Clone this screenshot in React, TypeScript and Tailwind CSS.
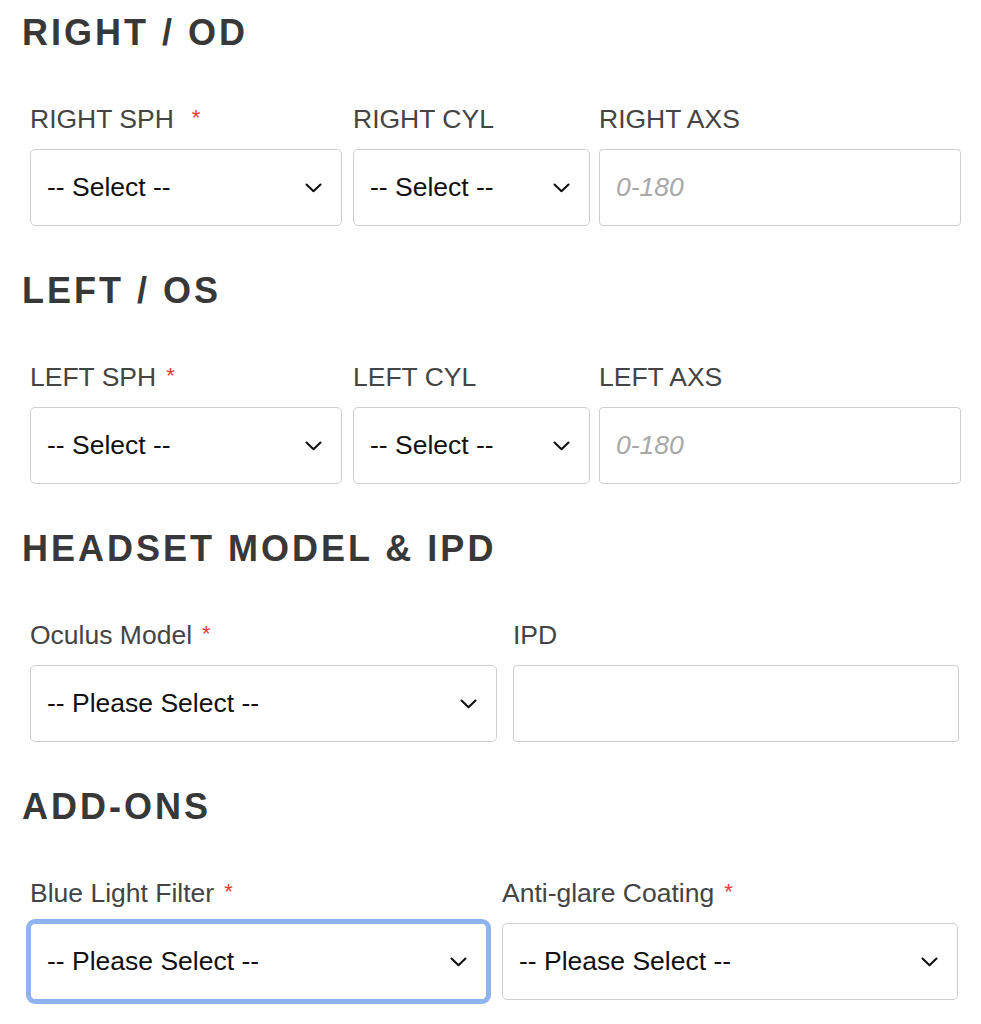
import React from "react";

const font = { fontFamily: '"Liberation Sans", Arial, sans-serif' };

function Chevron() {
  return (
    <svg width="17" height="10" viewBox="0 0 17 10" fill="none" className="shrink-0">
      <polyline points="1.5,1.5 8.5,8.2 15.5,1.5" stroke="#111" strokeWidth="2.1" strokeLinecap="round" strokeLinejoin="round" />
    </svg>
  );
}

function Label({ text, required, wide }: { text: string; required?: boolean; wide?: boolean }) {
  return (
    <div className="h-[32px] leading-[32px] text-[26.5px] text-[#444] whitespace-nowrap">
      {text}
      {required && (
        <span className={`text-[#e53a35] text-[22px] align-top relative top-[-1px] ${wide ? "ml-[18px]" : "ml-[10px]"}`}>*</span>
      )}
    </div>
  );
}

function SelectBox({ text, focused }: { text: string; focused?: boolean }) {
  return (
    <div
      className={`mt-[14px] h-[77px] rounded-[5px] bg-white flex items-center justify-between pl-[16px] pr-[19px] ${
        focused ? "border border-[#8fb3ee] shadow-[0_0_0_4px_#8fb3ee]" : "border-[1.5px] border-[#cfcfcf]"
      }`}
    >
      <span className="text-[26.5px] text-[#111] whitespace-nowrap">{text}</span>
      <Chevron />
    </div>
  );
}

function InputBox({ placeholder }: { placeholder?: string }) {
  return (
    <div className="mt-[14px] h-[77px] rounded-[4px] bg-white border-[1.5px] border-[#cfcfcf] flex items-center pl-[16px]">
      {placeholder && <span className="text-[26.5px] italic text-[#a8a8a8]">{placeholder}</span>}
    </div>
  );
}

function Heading({ children, first }: { children: React.ReactNode; first?: boolean }) {
  return (
    <h2 className={`${first ? "" : "mt-[43px]"} text-[36px] leading-[44px] font-bold tracking-[3px] text-[#383838] whitespace-nowrap`}>
      {children}
    </h2>
  );
}

export default function App() {
  return (
    <div className="w-[981px] min-h-[1024px] bg-white pt-[11px] pl-[22px]" style={font}>
      <Heading first>RIGHT / OD</Heading>
      <div className="mt-[48px] ml-[8px] flex">
        <div className="w-[312px]">
          <Label text="RIGHT SPH" required wide />
          <SelectBox text="-- Select --" />
        </div>
        <div className="w-[237px] ml-[11px]">
          <Label text="RIGHT CYL" />
          <SelectBox text="-- Select --" />
        </div>
        <div className="w-[362px] ml-[9px]">
          <Label text="RIGHT AXS" />
          <InputBox placeholder="0-180" />
        </div>
      </div>

      <Heading>LEFT / OS</Heading>
      <div className="mt-[48px] ml-[8px] flex">
        <div className="w-[312px]">
          <Label text="LEFT SPH" required />
          <SelectBox text="-- Select --" />
        </div>
        <div className="w-[237px] ml-[11px]">
          <Label text="LEFT CYL" />
          <SelectBox text="-- Select --" />
        </div>
        <div className="w-[362px] ml-[9px]">
          <Label text="LEFT AXS" />
          <InputBox placeholder="0-180" />
        </div>
      </div>

      <Heading>HEADSET MODEL &amp; IPD</Heading>
      <div className="mt-[48px] ml-[8px] flex">
        <div className="w-[467px]">
          <Label text="Oculus Model" required />
          <SelectBox text="-- Please Select --" />
        </div>
        <div className="w-[446px] ml-[16px]">
          <Label text="IPD" />
          <InputBox />
        </div>
      </div>

      <Heading>ADD-ONS</Heading>
      <div className="mt-[48px] ml-[8px] flex">
        <div className="w-[457px]">
          <Label text="Blue Light Filter" required />
          <SelectBox text="-- Please Select --" focused />
        </div>
        <div className="w-[456px] ml-[15px]">
          <Label text="Anti-glare Coating" required />
          <SelectBox text="-- Please Select --" />
        </div>
      </div>
    </div>
  );
}
